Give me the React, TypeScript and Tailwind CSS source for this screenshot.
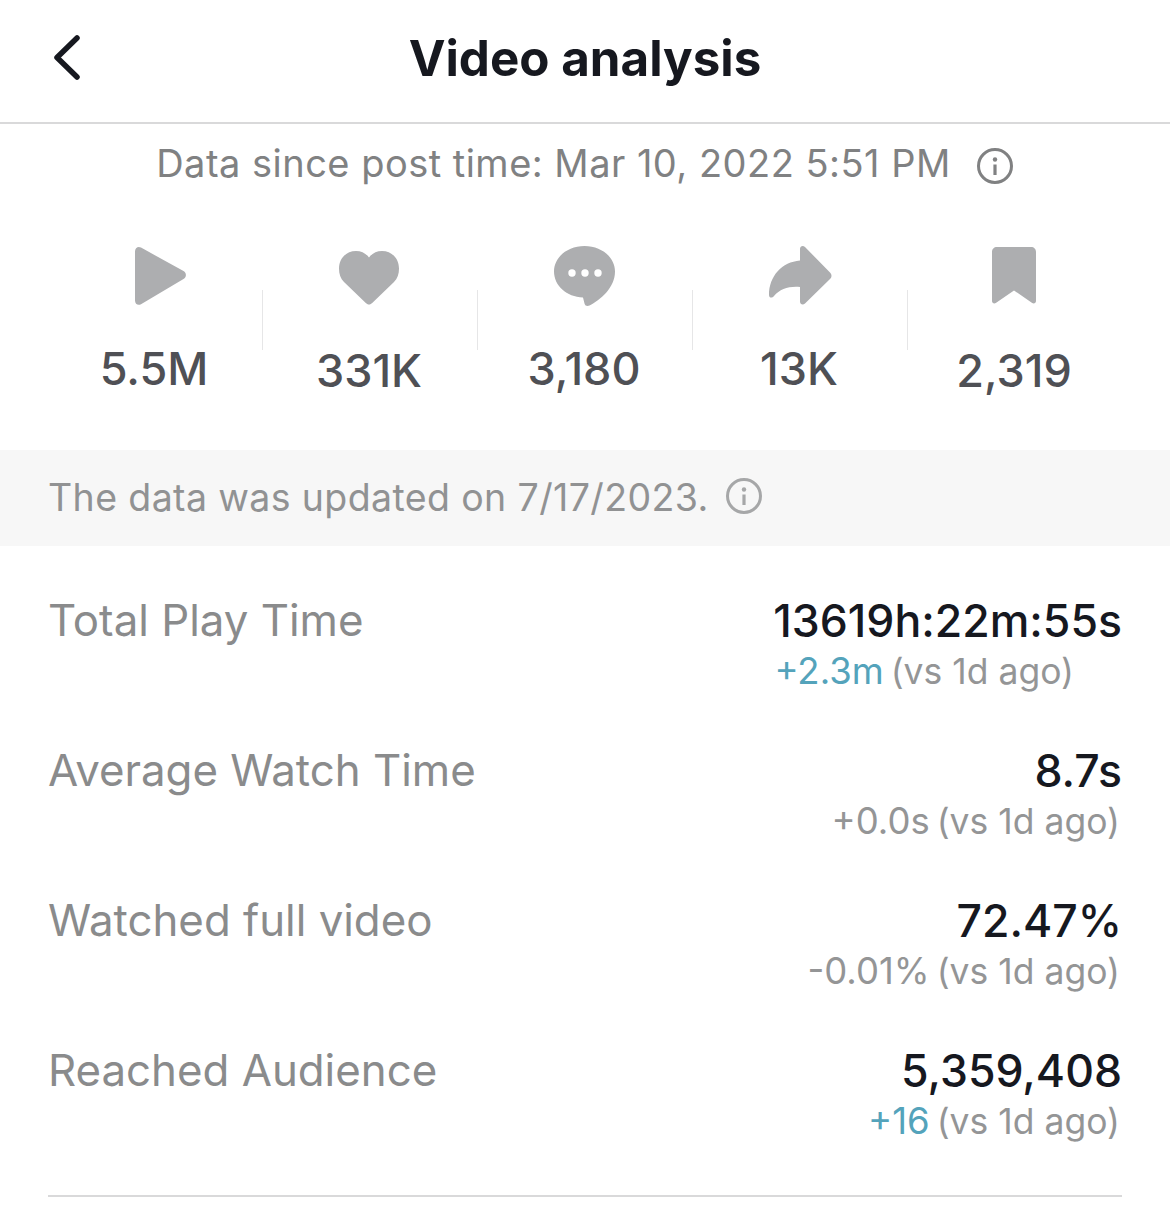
const FONT = "font-['Inter','Liberation_Sans',sans-serif]";

function InfoIcon({ className }: { className: string }) {
  return (
    <svg viewBox="0 0 38 38" className={className} fill="none" stroke="currentColor">
      <circle cx="19" cy="19" r="16.5" strokeWidth="3" />
      <circle cx="19" cy="12.5" r="2.2" fill="currentColor" stroke="none" />
      <path d="M19 17.500v10.500" strokeWidth="3.200" />
    </svg>
  );
}

const icons = [
  <svg viewBox="0 0 64 64" className="w-16 h-16 overflow-visible fill-[#adaeb0]" key="play">
    <path d="M13 7.500C13 4 16 2 19 3.600L61.500 27c3.200 1.800 3.200 6.200 0 8L19 60.200C16 61.800 13 60 13 56.500z" />
  </svg>,
  <svg viewBox="0 0 64 64" className="w-16 h-16 fill-[#adaeb0]" key="heart">
    <path d="M32 60.500c-1.300 0-2.300-.6-3.200-1.500L7 38C3.500 34.500 2 30 2 24.500 2 14 9.500 7 19 7c5.500 0 10 2.400 13 6.500C35 9.400 39.500 7 45 7c9.500 0 17 7 17 17.500 0 5.500-1.500 10-5 13.500L35.200 59C34.300 59.900 33.300 60.500 32 60.500z" />
  </svg>,
  <svg viewBox="0 0 64 64" className="w-16 h-16" key="comment">
    <path className="fill-[#adaeb0]" d="M32.500 2C15.600 2 2 13.200 2 27.500 2 41.500 14.500 53 31 53.500L32.500 59.500C33 62 35.500 62.500 37.500 61.500 48 56 63 44 63 27.500 63 13.200 49.400 2 32.500 2z" />
    <circle cx="20" cy="29" r="3.700" fill="#fff" />
    <circle cx="33" cy="29" r="3.700" fill="#fff" />
    <circle cx="46" cy="29" r="3.700" fill="#fff" />
  </svg>,
  <svg viewBox="0 0 64 64" className="w-16 h-16 overflow-visible fill-[#adaeb0]" key="share">
    <path d="M33 5C33 2 36 1 38 3L63 28.500C65 30.500 65 33 63 35L38 59.500C36 61.500 33 60.500 33 57.500V43C22 42 13 45 7 52 5 54.500 2 54 2 51 2 32 15 18 33 16.500z" />
  </svg>,
  <svg viewBox="0 0 64 64" className="w-16 h-16 fill-[#adaeb0]" key="bookmark">
    <path d="M15 3h34c3 0 5 2 5 5v49c0 2-2 3-3.800 2L32 46.500 13.800 59C12 60 10 59 10 57V8c0-3 2-5 5-5z" />
  </svg>,
];

const stats = [
  { value: "5.5M", low: false },
  { value: "331K", low: true },
  { value: "3,180", low: false },
  { value: "13K", low: false },
  { value: "2,319", low: true },
];

const rows = [
  { label: "Total Play Time", value: "13619h:22m:55s", delta: "+2.3m", color: "text-[#54a3bb]", pad: "pr-[48px]" },
  { label: "Average Watch Time", value: "8.7s", delta: "+0.0s", color: "text-[#949596]", pad: "pr-[2px]" },
  { label: "Watched full video", value: "72.47%", delta: "-0.01%", color: "text-[#949596]", pad: "pr-[2px]" },
  { label: "Reached Audience", value: "5,359,408", delta: "+16", color: "text-[#54a3bb]", pad: "pr-[2px]" },
];

export default function App() {
  return (
    <div className={`${FONT} w-[1170px] h-[1207px] bg-white overflow-hidden flex flex-col`}>
      {/* Header */}
      <div className="h-[124px] shrink-0 border-b-2 border-[#d9d9da] flex items-center relative">
        <svg viewBox="0 0 34 50" className="absolute left-[50px] top-[34px] w-[34px] h-[50px]" fill="none" stroke="#16181f" strokeWidth="5.500" strokeLinecap="round" strokeLinejoin="round">
          <path d="M27 4 L7 23.500 L27 43" />
        </svg>
        <h1 className="w-full text-center text-[49.300px] font-bold text-[#16181f] -mt-[4px]">Video analysis</h1>
      </div>

      <div className="h-[81px] shrink-0 flex items-center justify-center gap-[25px] text-[#808182] -mt-px">
        <span className="text-[38px] tracking-[0.48px]">Data since post time: Mar 10, 2022 5:51 PM</span>
        <InfoIcon className="w-[38px] h-[38px] mt-[4px]" />
      </div>

      {/* Stats */}
      <div className="flex px-[47px] h-[246px] shrink-0">
        {stats.map((s, i) => (
          <div key={s.value} className="flex">
            <div className="w-[214px] flex flex-col items-center pt-[40px]">
              {icons[i]}
              <span className={`text-[45px] font-medium text-[#4f5055] leading-[52px] ${s.low ? "mt-[37px]" : "mt-[35px]"}`}>{s.value}</span>
            </div>
            {i < 4 && <div className="w-px h-[60px] mt-[86px] ml-px -mr-px bg-[#e6e6e7]" />}
          </div>
        ))}
      </div>

      {/* Update notice */}
      <div className="h-[96px] shrink-0 bg-[#f7f7f7] flex items-center gap-[16px] px-[48px] text-[#919293]">
        <span className="text-[37.500px] tracking-[0.01em]">The data was updated on 7/17/2023.</span>
        <InfoIcon className="w-[38px] h-[38px] mb-[5px] text-[#a6a7a8]" />
      </div>

      {/* Metrics */}
      <div className="pl-[48px] pr-[48px] pt-[49px]">
        {rows.map((r) => (
          <div key={r.label} className="h-[150px] flex justify-between">
            <span className="text-[43.800px] leading-[52px] text-[#8a8b8c]">{r.label}</span>
            <div className="flex flex-col items-end">
              <span className="text-[44.600px] leading-[52px] font-medium text-[#16181f]">{r.value}</span>
              <span className={`text-[35.500px] leading-[50px] -mt-px text-[#949596] ${r.pad}`}>
                <span className={`text-[36.500px] -mr-[3px] ${r.color}`}>{r.delta}</span> (vs 1d ago)
              </span>
            </div>
          </div>
        ))}
      </div>
      <div className="mx-[48px] h-[2px] bg-[#d9d9da] w-[1074px]" />
    </div>
  );
}
